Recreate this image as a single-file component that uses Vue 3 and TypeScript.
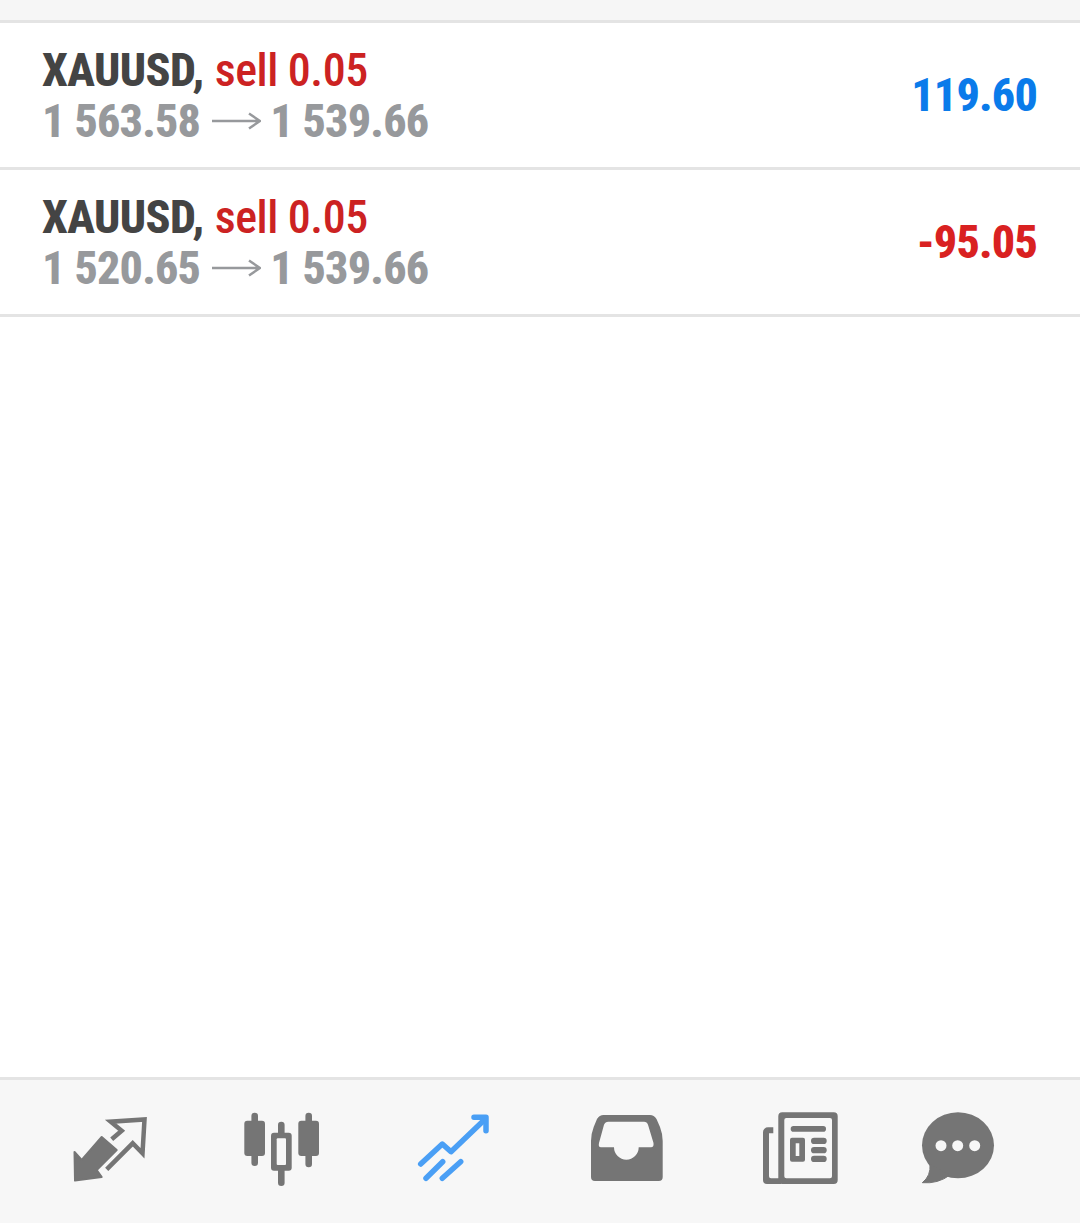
<script setup lang="ts">
interface Deal {
  symbol: string
  side: string
  from: string
  to: string
  profit: string
  loss: boolean
}

const deals: Deal[] = [
  { symbol: 'XAUUSD,', side: 'sell 0.05', from: '1 563.58', to: '1 539.66', profit: '119.60', loss: false },
  { symbol: 'XAUUSD,', side: 'sell 0.05', from: '1 520.65', to: '1 539.66', profit: '-95.05', loss: true }
]
</script>

<template>
  <div class="screen">
    <div class="top-strip"></div>

    <div v-for="(deal, i) in deals" :key="i" class="deal">
      <div class="info">
        <div class="line">
          <span class="symbol">{{ deal.symbol }}</span>
          <span class="side">{{ deal.side }}</span>
        </div>
        <div class="line prices">
          <span>{{ deal.from }}</span>
          <svg class="arrow" width="49" height="20" viewBox="0 0 49 20">
            <path d="M0 10H47M37 2.500l11 7.500-11 7.500" fill="none" stroke="#97999c" stroke-width="2.500" />
          </svg>
          <span>{{ deal.to }}</span>
        </div>
      </div>
      <div class="profit" :class="{ loss: deal.loss }">{{ deal.profit }}</div>
    </div>

    <div class="spacer"></div>

    <nav class="tabs">
      <svg class="tab" viewBox="65 1105 90 90">
        <path d="M74.500 1152L81.700 1160L101.700 1137L116.700 1150L96.700 1170L101.700 1177L75 1180.500Z" fill="#757575" stroke="#757575" stroke-width="2" stroke-linejoin="round" />
        <path d="M111.700 1139.300L121.700 1130.700L110.700 1121.700L144.500 1119.500L142.500 1153.300L132.700 1143.300L106.700 1169.300" fill="none" stroke="#757575" stroke-width="4.500" />
      </svg>
      <svg class="tab" viewBox="236 1105 90 90">
        <g fill="#757575">
          <rect x="244.300" y="1120.700" width="20.700" height="35.300" rx="3" />
          <rect x="251.400" y="1112.700" width="6.600" height="53.300" rx="3.300" />
          <rect x="298.300" y="1120.700" width="20.700" height="35.300" rx="3" />
          <rect x="305.400" y="1112.700" width="6.600" height="54.600" rx="3.300" />
          <rect x="278" y="1121.700" width="6.600" height="64.300" rx="3.300" />
          <rect x="271" y="1132.700" width="20.700" height="38" rx="3" />
        </g>
        <rect x="276.700" y="1138.300" width="9.300" height="26.700" rx="1" fill="#f7f7f7" />
      </svg>
      <svg class="tab" viewBox="407 1105 90 90">
        <g fill="none" stroke="#4a9ff5" stroke-width="5.500" stroke-linecap="round" stroke-linejoin="round">
          <path d="M420.700 1164L442.300 1144L451 1151.700L485 1119.300" />
          <path d="M474 1117.300H486V1130.700" />
          <path d="M426 1178.300L442.700 1161.700" />
          <path d="M442.300 1178.300L460.700 1161.700" />
        </g>
      </svg>
      <svg class="tab" viewBox="578 1105 90 90">
        <path fill="#757575" fill-rule="evenodd" d="M603.500 1115H650q4 0 6.500 4L660 1127q2.700 7 2.700 14V1177q0 4-4 4H595q-4 0-4-4V1141q0-7 2.700-14L597 1119q2.500-4 6.500-4ZM608.300 1121.700q-3 0-4.300 3L599 1143q-1 4.300 2 4.300H614a12.300 12.300 0 0 0 24.700 0H651q3 0 2.500-4.300L648 1124.700q-1-3-4-3Z" />
      </svg>
      <svg class="tab" viewBox="749 1105 90 90">
        <g fill="#757575">
          <path fill-rule="evenodd" d="M782.300 1112.300H833.700a4 4 0 0 1 4 4V1180a4 4 0 0 1-4 4H782.300a4 4 0 0 1-4-4V1116.300a4 4 0 0 1 4-4ZM786.300 1118a2 2 0 0 0-2 2V1176.300a2 2 0 0 0 2 2H830a2 2 0 0 0 2-2V1120a2 2 0 0 0-2-2Z" />
          <path d="M773.300 1127.300H768a5 5 0 0 0-5 5V1180a4 4 0 0 0 4 4H781V1178.300H771a2 2 0 0 1-2-2V1133.300H773.300Z" />
          <rect x="790.700" y="1126" width="35.300" height="5.700" rx="2.800" />
          <path fill-rule="evenodd" d="M792 1137.700H803a2 2 0 0 1 2 2V1159.700a2 2 0 0 1-2 2H792a2 2 0 0 1-2-2V1139.700a2 2 0 0 1 2-2ZM795.700 1143.300V1156H799.300V1143.300Z" />
          <rect x="811" y="1137.700" width="15.700" height="6.300" rx="3.100" />
          <rect x="811" y="1147" width="15.700" height="6.300" rx="3.100" />
          <rect x="811" y="1155.700" width="15.700" height="6.300" rx="3.100" />
        </g>
      </svg>
      <svg class="tab" viewBox="920 1105 90 90">
        <ellipse cx="958" cy="1145.300" rx="36" ry="33" fill="#757575" />
        <path d="M930 1164Q931 1176 922.300 1182.700Q938 1184 950 1175Z" fill="#757575" stroke="#757575" stroke-width="1" stroke-linejoin="round" />
        <g fill="#f7f7f7">
          <circle cx="941" cy="1145.700" r="5.500" />
          <circle cx="957.700" cy="1145.700" r="5.500" />
          <circle cx="974.700" cy="1145.700" r="5.500" />
        </g>
      </svg>
    </nav>
  </div>
</template>

<style scoped>
.screen {
  display: flex;
  flex-direction: column;
  width: 1080px;
  height: 1223px;
  overflow: hidden;
  background: #fff;
  font-family: Roboto, "Liberation Sans", sans-serif;
  font-stretch: 75%;
}

.top-strip {
  height: 20px;
  background: #f6f6f6;
  border-bottom: 3px solid #e4e4e4;
}

.deal {
  display: flex;
  justify-content: space-between;
  align-items: center;
  height: 144px;
  padding: 0 43px 0 42px;
  border-bottom: 3px solid #e4e4e4;
}

.line {
  display: flex;
  align-items: center;
  gap: 11px;
  height: 51px;
  font-size: 46px;
  white-space: nowrap;
}

.symbol {
  font-weight: 800;
  letter-spacing: -0.6px;
  color: #444;
}

.side {
  font-weight: 500;
  letter-spacing: -0.5px;
  color: #cc2222;
}

.prices {
  font-weight: 800;
  letter-spacing: -0.8px;
  color: #97999c;
}

.arrow {
  margin: 0 -2px 0 1px;
}

.profit {
  font-size: 46px;
  font-weight: 800;
  letter-spacing: -0.8px;
  color: #0a7bea;
}

.profit.loss {
  color: #d92121;
}

.spacer {
  flex: 1;
}

.tabs {
  display: flex;
  gap: 81px;
  height: 146px;
  padding: 25px 0 0 65px;
  box-sizing: border-box;
  background: #f7f7f7;
  border-top: 3px solid #e4e4e4;
}

.tab {
  width: 90px;
  height: 90px;
  flex: none;
}
</style>
